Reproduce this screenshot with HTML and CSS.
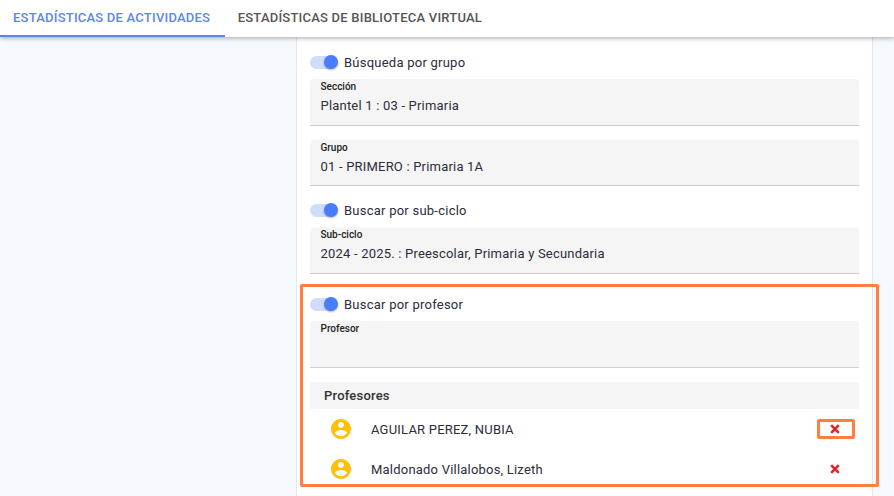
FILE: index.html
```html
<!DOCTYPE html>
<html lang="es">
<head>
<meta charset="utf-8">
<title>Estadísticas</title>
<link rel="stylesheet" href="styles.css">
</head>
<body>
<nav class="tabs">
  <div class="tab active">ESTADÍSTICAS DE ACTIVIDADES</div>
  <div class="tab">ESTADÍSTICAS DE BIBLIOTECA VIRTUAL</div>
</nav>
<main class="content">
  <section class="card">
    <label class="toggle-row"><span class="switch"><span class="knob"></span></span><span>Búsqueda por grupo</span></label>
    <div class="field"><div class="field-label">Sección</div><div class="field-value">Plantel 1 : 03 - Primaria</div></div>
    <div class="field second"><div class="field-label">Grupo</div><div class="field-value">01 - PRIMERO : Primaria 1A</div></div>
    <label class="toggle-row"><span class="switch"><span class="knob"></span></span><span>Buscar por sub-ciclo</span></label>
    <div class="field"><div class="field-label">Sub-ciclo</div><div class="field-value">2024 - 2025. : Preescolar, Primaria y Secundaria</div></div>
    <label class="toggle-row third"><span class="switch"><span class="knob"></span></span><span>Buscar por profesor</span></label>
    <div class="field"><div class="field-label">Profesor</div><div class="field-value"></div></div>
    <div class="list-header">Profesores</div>
    <div class="list-row">
      <svg class="avatar" viewBox="2 2 20 20"><path fill="#ffc107" d="M12 2C6.48 2 2 6.480 2 12s4.480 10 10 10 10-4.480 10-10S17.520 2 12 2zm0 3c1.660 0 3 1.340 3 3s-1.340 3-3 3-3-1.340-3-3 1.340-3 3-3zm0 14.200c-2.500 0-4.710-1.280-6-3.220.030-1.990 4-3.080 6-3.080 1.990 0 5.970 1.090 6 3.080-1.290 1.940-3.500 3.220-6 3.220z"/></svg>
      <span class="name">AGUILAR PEREZ, NUBIA</span>
      <svg class="remove" viewBox="0 0 10 10"><path d="M1.200 1.200l7.600 7.600M8.800 1.200l-7.600 7.600" stroke="#e8232a" stroke-width="2.600" fill="none"/></svg>
    </div>
    <div class="list-row">
      <svg class="avatar" viewBox="2 2 20 20"><path fill="#ffc107" d="M12 2C6.48 2 2 6.480 2 12s4.480 10 10 10 10-4.480 10-10S17.520 2 12 2zm0 3c1.660 0 3 1.340 3 3s-1.340 3-3 3-3-1.340-3-3 1.340-3 3-3zm0 14.200c-2.500 0-4.710-1.280-6-3.220.030-1.990 4-3.080 6-3.080 1.990 0 5.970 1.090 6 3.080-1.290 1.940-3.500 3.220-6 3.220z"/></svg>
      <span class="name">Maldonado Villalobos, Lizeth</span>
      <svg class="remove" viewBox="0 0 10 10"><path d="M1.200 1.200l7.600 7.600M8.800 1.200l-7.600 7.600" stroke="#e8232a" stroke-width="2.600" fill="none"/></svg>
    </div>
  </section>
</main>
<div class="mark mark-section"></div>
<div class="mark mark-button"></div>
</body>
</html>
```
FILE: styles.css
```css
* { box-sizing: border-box; }
html, body { margin: 0; height: 100%; }
body {
  width: 894px;
  height: 496px;
  overflow: hidden;
  position: relative;
  background: #f6fafe;
  font-family: Roboto, sans-serif;
  color: #2c2c3a;
}
.tabs {
  display: flex;
  height: 37px;
  background: #fff;
  box-shadow: 0 1px 5px rgba(0,0,0,.35);
  position: relative;
  z-index: 1;
}
.tab {
  padding: 0 14.500px 0 13px;
  font-size: 13px;
  font-weight: 500;
  letter-spacing: .22px;
  line-height: 35px;
  color: #555;
  white-space: nowrap;
}
.tab.active {
  color: #5b86f2;
  border-bottom: 2px solid #5b86f2;
}
.content {
  padding-left: 296px;
  padding-right: 21px;
}
.card {
  width: 577px;
  height: 459px;
  background: #fff;
  border-left: 1px solid #e3e6ea;
  border-right: 1px solid #e3e6ea;
  padding: 16px 13px 0;
}
.toggle-row {
  display: flex;
  align-items: center;
  gap: 7px;
  height: 18px;
  margin-top: 15px;
  margin-bottom: 8px;
  font-size: 13px;
  letter-spacing: .24px;
}
.toggle-row:first-child { margin-top: 0; }
.toggle-row.third { margin-top: 21px; }
.switch {
  position: relative;
  width: 27px;
  height: 13px;
  border-radius: 7px;
  background: #cfdcfb;
  flex: none;
}
.knob {
  position: absolute;
  right: -0.500px;
  top: -0.500px;
  width: 14px;
  height: 14px;
  border-radius: 50%;
  background: #4a7dfb;
  box-shadow: 0 1px 2px rgba(0,0,0,.3);
}
.field {
  height: 47px;
  background: #f5f5f5;
  border-bottom: 1px solid #cfcfcf;
  border-radius: 4px 4px 0 0;
  padding: 2px 10.500px 0;
}
.field.second { margin-top: 13px; padding-top: 3px; }
.field-label {
  font-size: 10px;
  font-weight: 500;
  line-height: 12px;
  color: #222;
}
.field-value {
  font-size: 13px;
  letter-spacing: .2px;
  line-height: 18px;
  margin-top: 4px;
}
.list-header {
  height: 27px;
  margin-top: 14px;
  background: #f5f5f5;
  padding-left: 14px;
  font-size: 13px;
  font-weight: 500;
  letter-spacing: .2px;
  line-height: 27px;
  color: #333;
}
.list-row {
  display: flex;
  align-items: center;
  height: 40px;
  padding-left: 20.500px;
  font-size: 13px;
  letter-spacing: .21px;
}
.avatar { width: 20px; height: 20px; flex: none; }
.name { margin-left: 20.500px; flex: 1; }
.remove { width: 10px; height: 10px; margin-right: 19px; flex: none; }
.mark {
  position: absolute;
  border: 3px solid #ff7f3f;
  border-radius: 2px;
}
.mark-section { left: 300px; top: 284px; width: 579px; height: 203px; }
.mark-button { left: 817px; top: 419px; width: 38px; height: 20px; }
```
